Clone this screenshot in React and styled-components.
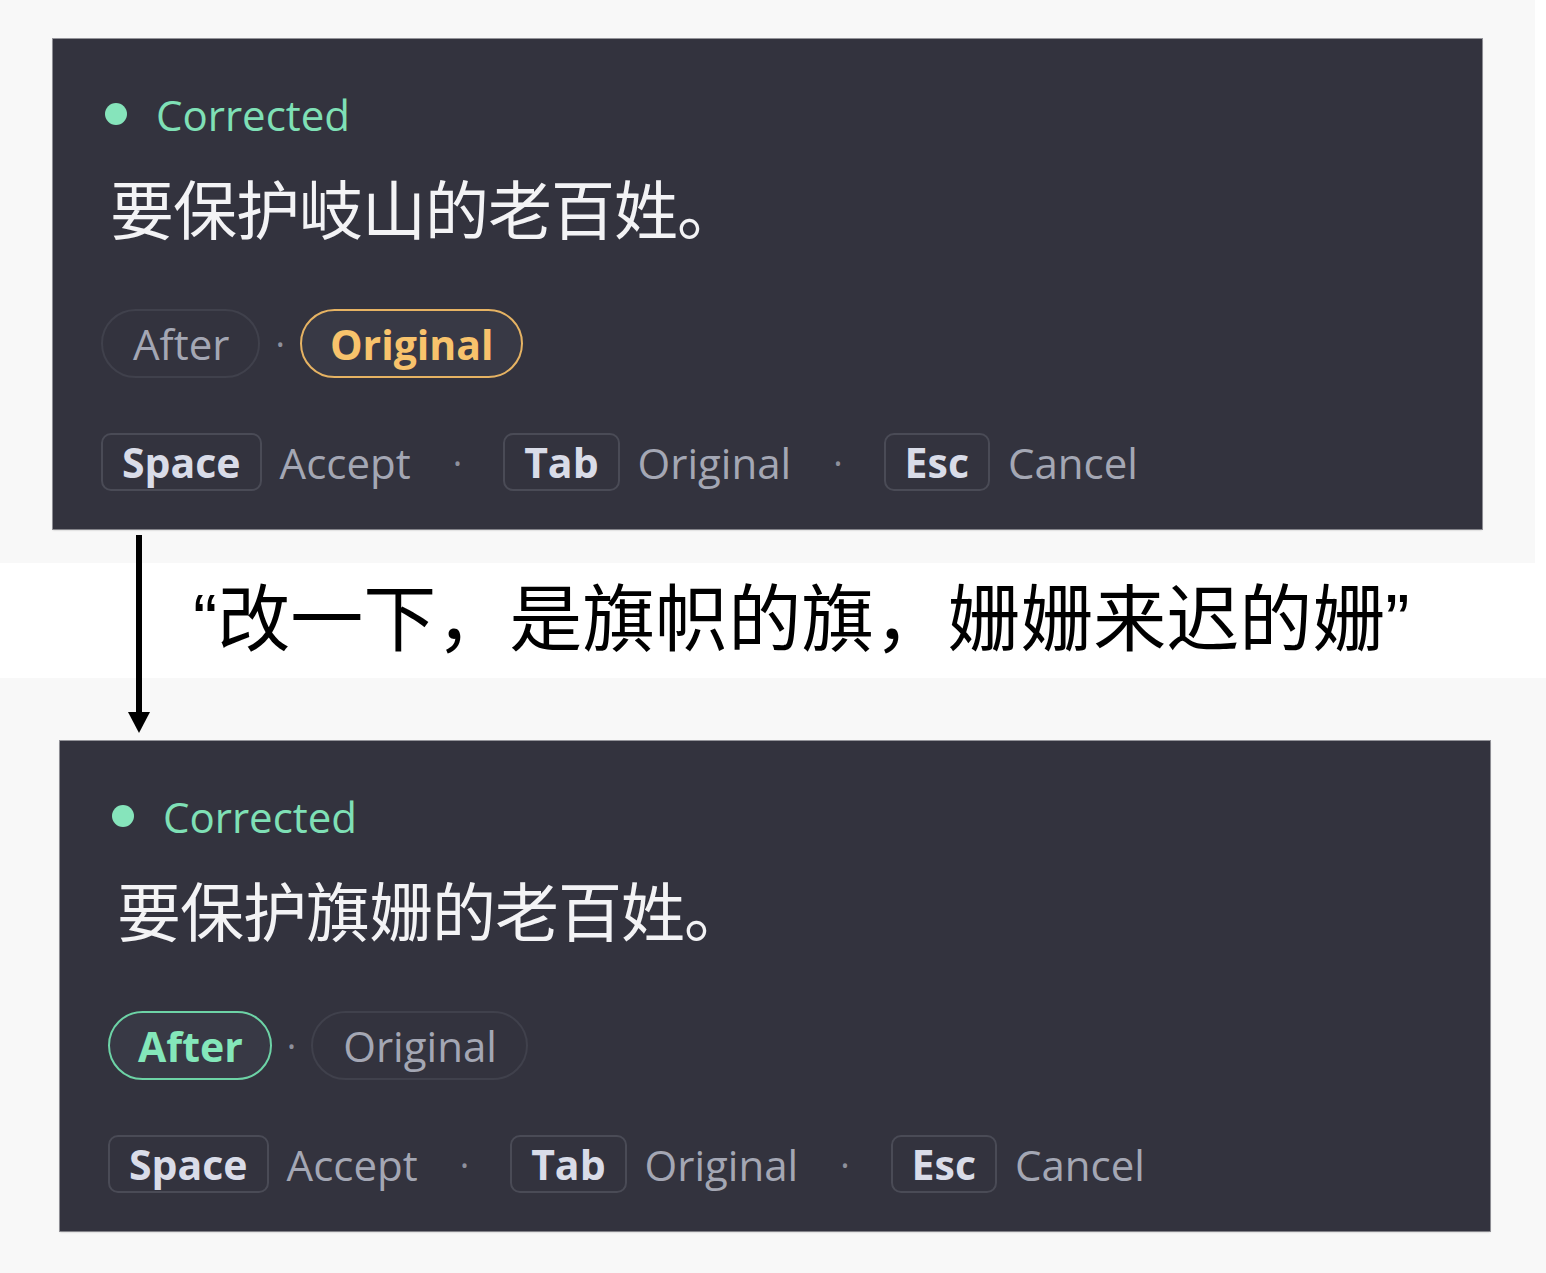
import React from 'react'
import styled, { createGlobalStyle } from 'styled-components'

const GlobalStyle = createGlobalStyle`
  html, body {
    margin: 0;
    padding: 0;
    background: #ffffff;
  }
  body {
    font-family: "Open Sans", "Noto Sans CJK SC", sans-serif;
  }
`

const Page = styled.div`
  position: relative;
  width: 1546px;
  height: 1273px;
  overflow: hidden;
`

const Section = styled.div`
  box-sizing: border-box;
  width: ${p => p.$width}px;
  height: ${p => p.$height}px;
  padding: ${p => p.$pad};
  background: #f8f8f8;
`

const Caption = styled.div`
  box-sizing: border-box;
  height: 115px;
  padding-left: 193px;
  font-family: "Liberation Sans", "Noto Sans CJK SC", sans-serif;
  font-size: 73px;
  line-height: 113px;
  color: #000;
  white-space: nowrap;
`

const Panel = styled.div`
  box-sizing: border-box;
  width: ${p => p.$width}px;
  height: 490px;
  padding: 50px 0 0 48px;
  display: flex;
  flex-direction: column;
  align-items: flex-start;
  background: #33333e;
  box-shadow: 0 0 0 1px rgba(70, 70, 80, 0.55), 0 1px 2px rgba(0, 0, 0, 0.25);
`

const Status = styled.div`
  display: flex;
  align-items: center;
  gap: 29px;
  height: 50px;
  margin-left: 4px;
  font-size: 42px;
  color: #7fe0b6;
`

const Dot = styled.span`
  width: 22px;
  height: 22px;
  border-radius: 50%;
  background: #86e4bb;
`

const Sentence = styled.div`
  margin: 28px 0 0 9px;
  height: 80px;
  font-family: "Noto Sans CJK SC", sans-serif;
  font-size: 64px;
  line-height: 78px;
  letter-spacing: -1px;
  color: #f3f3f5;
`

const Choices = styled.div`
  display: flex;
  align-items: center;
  gap: 15px;
  margin-top: 62px;
`

const Pill = styled.div`
  box-sizing: border-box;
  height: 69px;
  padding: ${p => (p.$active ? '0 27px 0 28px' : '0 29px 0 30px')};
  display: flex;
  align-items: center;
  border-radius: 35px;
  border: 2px solid ${p => (p.$active ? p.$tone : '#40414c')};
  background: ${p => (p.$active ? '#383945' : 'transparent')};
  font-size: ${p => (p.$active ? 41 : 42)}px;
  font-weight: ${p => (p.$active ? 700 : 400)};
  color: ${p => (p.$active ? p.$text : '#a4a7b4')};
`

const Sep = styled.span`
  font-size: 36px;
  color: #8e909c;
  margin: ${p => (p.$wide ? '0 41px 0 42px' : '0')};
`

const Hints = styled.div`
  display: flex;
  align-items: center;
  margin-top: 55px;
`

const Key = styled.span`
  box-sizing: border-box;
  height: 58px;
  padding: 0 19px;
  display: flex;
  align-items: center;
  border: 2px solid #4a4b56;
  border-radius: 10px;
  font-size: 41px;
  font-weight: 700;
  color: #d9dce8;
`

const HintLabel = styled.span`
  margin-left: 18px;
  font-size: 42px;
  color: #a4a7b4;
`

const Arrow = styled.svg`
  position: absolute;
  left: 127px;
  top: 535px;
`

const tones = {
  after: { border: '#6dd3a6', text: '#84e7ba' },
  original: { border: '#e6b363', text: '#f8c36c' },
}

const hints = [
  { key: 'Space', label: 'Accept' },
  { key: 'Tab', label: 'Original' },
  { key: 'Esc', label: 'Cancel' },
]

function CorrectionPanel({ width, text, active }) {
  return (
    <Panel $width={width}>
      <Status>
        <Dot />
        Corrected
      </Status>
      <Sentence>{text}</Sentence>
      <Choices>
        <Pill $active={active === 'after'} $tone={tones.after.border} $text={tones.after.text}>
          After
        </Pill>
        <Sep>·</Sep>
        <Pill $active={active === 'original'} $tone={tones.original.border} $text={tones.original.text}>
          Original
        </Pill>
      </Choices>
      <Hints>
        {hints.map((h, i) => (
          <React.Fragment key={h.key}>
            {i > 0 && <Sep $wide>·</Sep>}
            <Key>{h.key}</Key>
            <HintLabel>{h.label}</HintLabel>
          </React.Fragment>
        ))}
      </Hints>
    </Panel>
  )
}

export default function App() {
  return (
    <>
      <GlobalStyle />
      <Page>
        <Section $width={1535} $height={563} $pad="39px 0 0 53px">
          <CorrectionPanel width={1429} text="要保护岐山的老百姓。" active="original" />
        </Section>
        <Caption>“改一下，是旗帜的旗，姗姗来迟的姗”</Caption>
        <Section $width={1546} $height={595} $pad="63px 0 0 60px">
          <CorrectionPanel width={1430} text="要保护旗姗的老百姓。" active="after" />
        </Section>
        <Arrow width="24" height="200" viewBox="0 0 24 200">
          <rect x="9" y="0" width="6" height="180" fill="#000" />
          <polygon points="1,177 23,177 12,198" fill="#000" />
        </Arrow>
      </Page>
    </>
  )
}
